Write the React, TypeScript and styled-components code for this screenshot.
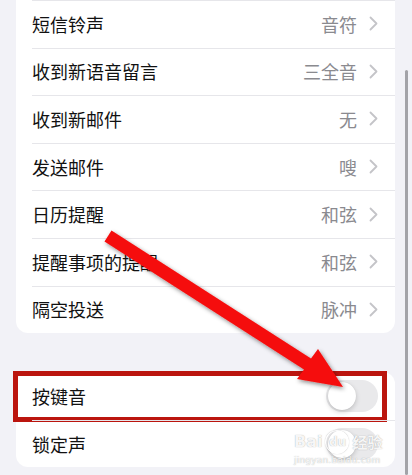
import React from "react";
import styled, { createGlobalStyle } from "styled-components";

const Global = createGlobalStyle`
  html, body { margin: 0; padding: 0; background: #f2f2f7; }
  body { font-family: "Noto Sans CJK SC", "Noto Sans", sans-serif; -webkit-font-smoothing: antialiased; }
  #root { width: 412px; height: 475px; overflow: hidden; }
`;

const Screen = styled.div`
  position: relative;
  width: 412px;
  height: 475px;
  overflow: hidden;
  background: #f2f2f7;
  display: flex;
  flex-direction: column;
  gap: 39px;
  padding: 0 17px 0 16px;
  box-sizing: border-box;
`;

const Card = styled.div<{ $topCut?: boolean }>`
  background: #ffffff;
  border-radius: ${(p) => (p.$topCut ? "0 0 12px 12px" : "12px")};
  display: flex;
  flex-direction: column;
`;

const Row = styled.div<{ $divider?: boolean }>`
  position: relative;
  height: 47.6px;
  display: flex;
  align-items: center;
  padding: 0 17px 0 16px;
  box-sizing: border-box;
  &::before {
    content: "";
    display: ${(p) => (p.$divider ? "block" : "none")};
    position: absolute;
    top: 0;
    left: 16px;
    right: 0;
    height: 1px;
    background: #e6e6ea;
  }
`;

const Label = styled.span`
  flex: 1;
  font-size: 18px;
  color: #111111;
`;

const Value = styled.span`
  font-size: 18px;
  color: #8a8a8f;
  margin-right: 12px;
`;

const Chevron = styled.svg`
  width: 9px;
  height: 15px;
  flex: none;
`;

const Toggle = styled.div`
  width: 52px;
  height: 32px;
  border-radius: 16px;
  background: #e9e9eb;
  position: relative;
  flex: none;
  &::after {
    content: "";
    position: absolute;
    left: 2px;
    top: 2px;
    width: 28px;
    height: 28px;
    border-radius: 50%;
    background: #fff;
    box-shadow: 0 2px 5px rgba(0, 0, 0, 0.18), 0 0 1px rgba(0, 0, 0, 0.12);
  }
`;

const Highlight = styled.div`
  position: absolute;
  left: -3px;
  right: 8px;
  top: -1px;
  bottom: -2.5px;
  border: 5.5px solid #bb150e;
  pointer-events: none;
`;

const ScrollIndicator = styled.div`
  position: absolute;
  left: 405px;
  top: 70px;
  width: 2.5px;
  bottom: 0;
  background: #a3a3a8;
  border-radius: 2px;
`;

const ArrowLayer = styled.svg`
  position: absolute;
  left: 0;
  top: 0;
  width: 412px;
  height: 475px;
  pointer-events: none;
  overflow: visible;
`;

const Watermark = styled.div`
  position: absolute;
  left: 294px;
  top: 430px;
  display: flex;
  flex-direction: column;
  align-items: flex-start;
  color: rgba(255, 255, 255, 0.92);
  text-shadow: 0 0 1px rgba(120, 120, 120, 0.7);
  pointer-events: none;
`;

const MarkLine = styled.div`
  display: flex;
  align-items: center;
  gap: 1px;
  font-family: "DejaVu Sans", sans-serif;
  font-weight: bold;
  font-size: 16px;
  line-height: 20px;
`;

const DuCircle = styled.span`
  display: inline-flex;
  align-items: center;
  justify-content: center;
  width: 22px;
  height: 22px;
  border-radius: 50%;
  border: 1.5px solid rgba(255, 255, 255, 0.92);
  box-shadow: 0 0 1px rgba(120, 120, 120, 0.6);
  font-size: 12px;
  margin: 0 2px;
`;

const MarkCJK = styled.span`
  font-family: "Noto Sans CJK SC", sans-serif;
  font-size: 15px;
  font-weight: bold;
`;

const MarkUrl = styled.div`
  font-family: "DejaVu Sans", sans-serif;
  font-size: 9px;
  line-height: 12px;
  letter-spacing: 0.2px;
`;

const ChevronIcon = () => (
  <Chevron viewBox="0 0 9 15">
    <path d="M1.5 1.5 L7.5 7.5 L1.5 13.5" fill="none" stroke="#c4c4c8" strokeWidth="1.8" strokeLinecap="round" strokeLinejoin="round" />
  </Chevron>
);

const rows: [string, string][] = [
  ["短信铃声", "音符"],
  ["收到新语音留言", "三全音"],
  ["收到新邮件", "无"],
  ["发送邮件", "嗖"],
  ["日历提醒", "和弦"],
  ["提醒事项的提醒", "和弦"],
  ["隔空投送", "脉冲"],
];

export default function App() {
  return (
    <>
      <Global />
      <Screen>
        <Card $topCut>
          {rows.map(([label, value]) => (
            <Row key={label} $divider>
              <Label>{label}</Label>
              <Value>{value}</Value>
              <ChevronIcon />
            </Row>
          ))}
        </Card>
        <Card>
          <Row>
            <Label>按键音</Label>
            <Toggle />
            <Highlight />
          </Row>
          <Row $divider>
            <Label>锁定声</Label>
            <Toggle />
          </Row>
        </Card>
        <ScrollIndicator />
        <ArrowLayer viewBox="0 0 412 475">
          <defs>
            <filter id="arrowShadow" x="-20%" y="-20%" width="140%" height="140%">
              <feDropShadow dx="1.5" dy="2" stdDeviation="2.2" floodColor="#000" floodOpacity="0.45" />
            </filter>
          </defs>
          <polygon
            points="111.5,230.5 311,358.5 318,349 343,387 297,379 304,369.5 104.5,241.5"
            fill="#f50c0c"
            filter="url(#arrowShadow)"
          />
        </ArrowLayer>
        <Watermark>
          <MarkLine>
            <span>Bai</span>
            <DuCircle>du</DuCircle>
            <MarkCJK>经验</MarkCJK>
          </MarkLine>
          <MarkUrl>jingyan.baidu.com</MarkUrl>
        </Watermark>
      </Screen>
    </>
  );
}
